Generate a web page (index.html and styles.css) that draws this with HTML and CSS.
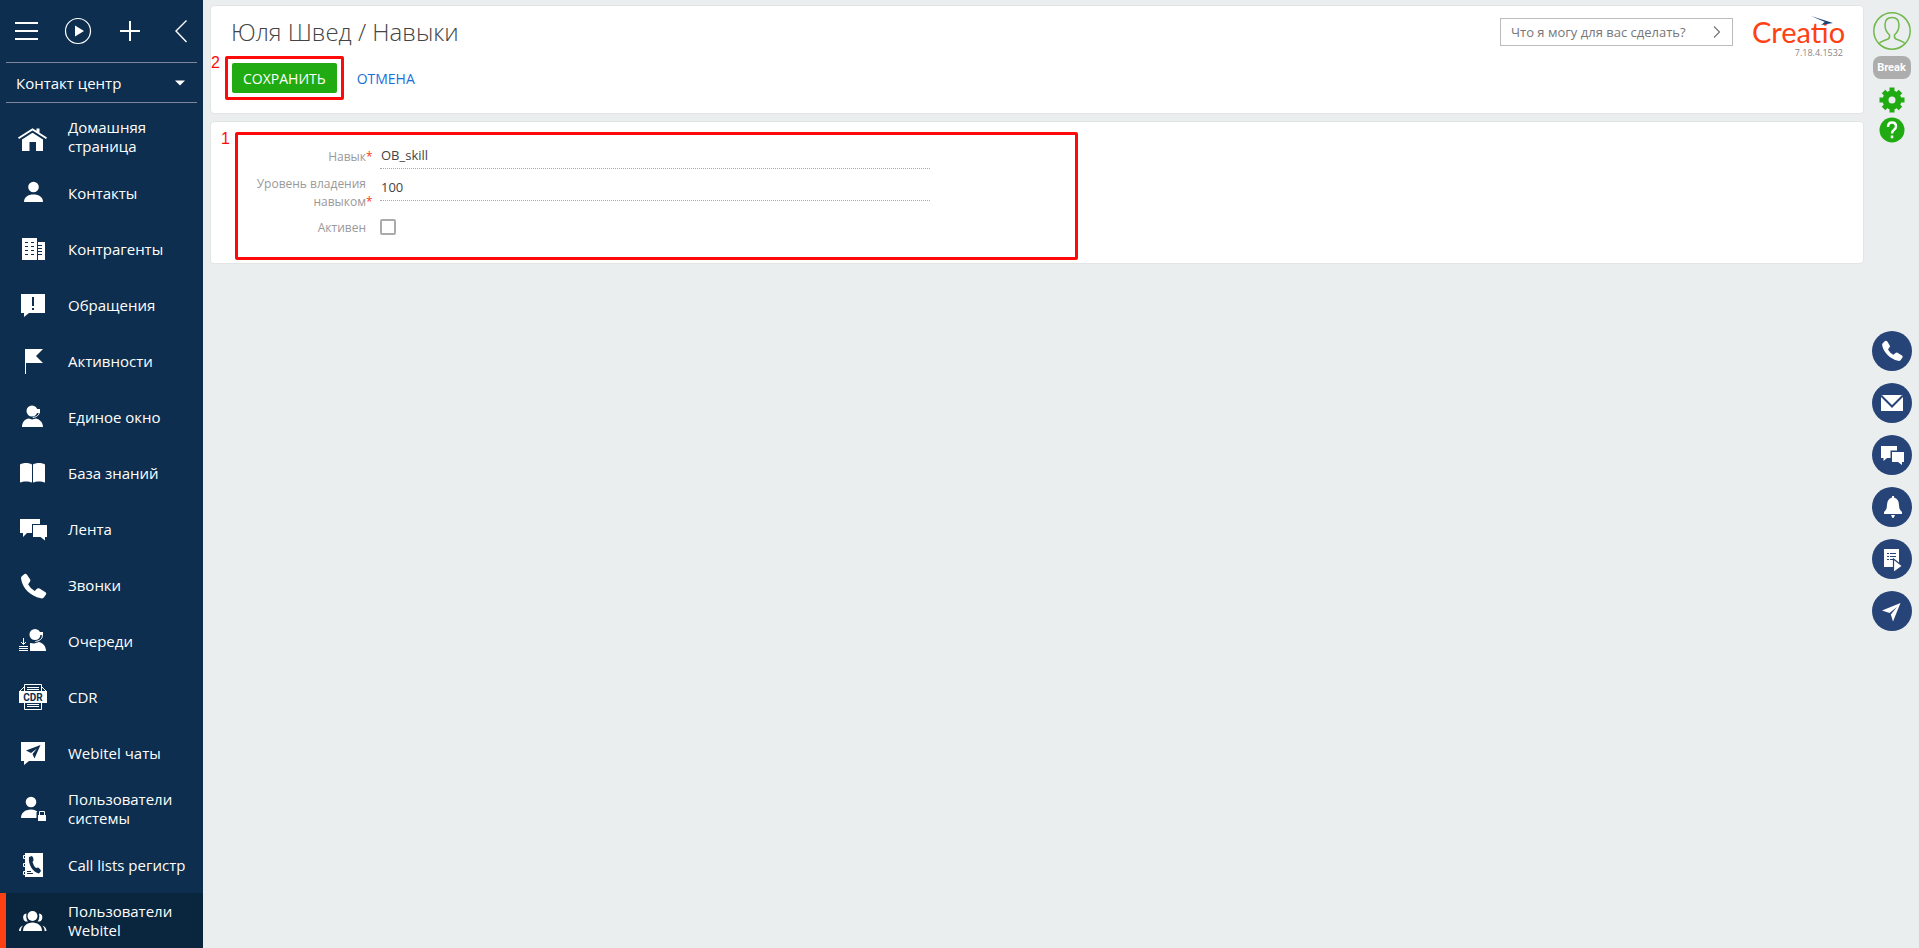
FILE: index.html
```html
<!DOCTYPE html>
<html lang="ru">
<head>
  <meta charset="UTF-8" />
  <meta name="viewport" content="width=device-width, initial-scale=1.0" />
  <title>Юля Швед / Навыки</title>
  <link rel="stylesheet" href="styles.css">
</head>
<body>
  <aside class="sidebar">
    <div class="sidebar-tools">
      <button type="button" aria-label="Меню">
        <svg width="24" height="28" viewBox="0 0 24 28"><path d="M0 6h23M0 14h23M0 22h23" stroke="#fff" stroke-width="2"/></svg>
      </button>
      <button type="button" aria-label="Запустить процесс">
        <svg width="28" height="28" viewBox="0 0 28 28"><circle cx="14" cy="14" r="12.5" fill="none" stroke="#fff" stroke-width="1.2"/><path d="M11 8.500v11l9-5.500z" fill="#fff"/></svg>
      </button>
      <button type="button" aria-label="Создать">
        <svg width="20" height="28" viewBox="0 0 20 28"><path d="M10 4v20M0 14h20" stroke="#fff" stroke-width="2"/></svg>
      </button>
      <button type="button" aria-label="Свернуть">
        <svg width="14" height="28" viewBox="0 0 14 28"><path d="M12.500 3.500L2 14l10.500 11" fill="none" stroke="#fff" stroke-width="1.4"/></svg>
      </button>
    </div>
    <button type="button" class="workplace">
      <span>Контакт центр</span>
      <svg width="10" height="6" viewBox="0 0 10 6"><path d="M0 0.500h10L5 5.500z" fill="#fff"/></svg>
    </button>

    <nav class="menu">
      <a href="#" class="menu-item">
        <svg class="menu-icon" viewBox="0 0 32 32"><path d="M2 16.500L16.500 7.200l4 2.500V7.500h3v4.200L31 16.500l-1 1.500L16.500 9.500 3 18z"/><path d="M6 18.500l10.500-6.700L27 18.500V30h-7v-9h-6.500v9H6z"/></svg>
        <span>Домашняя страница</span>
      </a>
      <a href="#" class="menu-item">
        <svg class="menu-icon" viewBox="0 0 32 32"><circle cx="17.500" cy="10" r="5.300"/><path d="M8 25c0-5 4-7.500 9.500-7.500s9.500 2.500 9.500 7.500z"/></svg>
        <span>Контакты</span>
      </a>
      <a href="#" class="menu-item">
        <svg class="menu-icon" viewBox="0 0 32 32"><path d="M6 5h15v22H6zM22 9h7v18h-7z"/><path class="cut" d="M9 9.500h3M15 9.500h3M9 13.500h3M15 13.500h3M9 17.500h3M15 17.500h3M9 21.500h3M15 21.500h3M22 12.500h4M22 15.500h4M22 18.500h4M22 21.500h4"/></svg>
        <span>Контрагенты</span>
      </a>
      <a href="#" class="menu-item">
        <svg class="menu-icon" viewBox="0 0 32 32"><path d="M5 5h24v19H13l-5 4v-4H5z"/><path class="cut cut-bold" d="M17 8v9M17 19v2"/></svg>
        <span>Обращения</span>
      </a>
      <a href="#" class="menu-item">
        <svg class="menu-icon" viewBox="0 0 32 32"><path d="M9 4h18l-7 7 7 7H10v11H9z"/></svg>
        <span>Активности</span>
      </a>
      <a href="#" class="menu-item">
        <svg class="menu-icon" viewBox="0 0 32 32"><circle cx="16" cy="10" r="5.500"/><path d="M6 26c0-5 3-8 7-8.500l3 1 4-1c4 1 7 4 7 8.500z"/><path class="line" d="M23.300 9v2c0 3-2.500 5-6.500 5.500"/><path d="M21 8h3v4h-3z"/></svg>
        <span>Единое окно</span>
      </a>
      <a href="#" class="menu-item">
        <svg class="menu-icon" viewBox="0 0 32 32"><path d="M4 7.500C7 5.500 13 5.500 16 7.500v18c-3-1.500-9-1.500-12 0zM17 7.500c3-2 9-2 12 0v18c-3-1.500-9-1.500-12 0z"/></svg>
        <span>База знаний</span>
      </a>
      <a href="#" class="menu-item">
        <svg class="menu-icon" viewBox="0 0 32 32"><path d="M4 6h20v5h-8v9h-5l-4 4v-4H4z"/><path d="M17 12h14v12h-2v3.500L24.500 24H17z"/></svg>
        <span>Лента</span>
      </a>
      <a href="#" class="menu-item">
        <svg class="menu-icon" viewBox="0 0 32 32"><path d="M5.500 7.500L8.500 5q1.500-.6 2.500.8l3.200 4.800q.6 1.300-.4 2.400l-1.700 2.300q2.300 4.500 6.600 6.700l2.500-2.400q1.200-.8 2.400-.1l5.900 3.700q1.300 1 .5 2.400l-2.200 2.900q-1 1.200-2.900.8C14 27 6.500 19 5.100 10q-.3-1.500.4-2.500z"/></svg>
        <span>Звонки</span>
      </a>
      <a href="#" class="menu-item">
        <svg class="menu-icon" viewBox="0 0 32 32"><circle cx="19" cy="9.500" r="5.500"/><path d="M14 26v-8l4 0.500 5-1.500c4 1 7 4 7 9z"/><path class="line" d="M26.300 9v2c0 3-3 5-7 5.500M7.500 13v6M5 17l2.500 2.500L10 17M3 21.500h9M3 23.500h9M3 25.500h9"/><path d="M24 7h3v3h-3z"/></svg>
        <span>Очереди</span>
      </a>
      <a href="#" class="menu-item">
        <svg class="menu-icon" viewBox="0 0 32 32"><path class="line" d="M8.500 10V3.500h17V10M11 6.500h12M11 8.500h12M8.500 22v6.500h17V22M11 23.500h12M11 25.500h12M4 10l4-4M30 10l-4-4"/><path d="M3 10h28v12H3z"/><text x="17" y="20" class="icon-text">CDR</text></svg>
        <span>CDR</span>
      </a>
      <a href="#" class="menu-item">
        <svg class="menu-icon" viewBox="0 0 32 32"><path d="M5 5h24v19H13l-5 4v-4H5z"/><path class="cut-fill" d="M10 13.500L24.500 8 18.500 21.500 16.500 17l4.500-5.500-6 4.500z"/></svg>
        <span>Webitel чаты</span>
      </a>
      <a href="#" class="menu-item">
        <svg class="menu-icon" viewBox="0 0 32 32"><circle cx="15" cy="9" r="5.300"/><path d="M5 25c0-5 4-8.500 10-8.500 3 0 5.500 1 6.500 2.500h-1V25z"/><path d="M22 22h8v6h-8z"/><path class="line" d="M23.500 22v-3.500h5V22"/></svg>
        <span>Пользователи системы</span>
      </a>
      <a href="#" class="menu-item">
        <svg class="menu-icon" viewBox="0 0 32 32"><path d="M9 4h18v24H9z"/><path class="line" d="M9 6.500H7.500v3H9M9 14.500H7.500v3H9M9 22.500H7.500v3H9"/><path class="cut-fill" d="M13 8l3-1q2 2 1.500 4.500L16.500 13q1 4 3.500 6l2-.5q2.500 1 3 3.500l-2 2.500C17 23 12 16 13 8z"/><path class="cut" d="M11 22.500h4M11 24.500h6"/></svg>
        <span>Call lists регистр</span>
      </a>
      <a href="#" class="menu-item active">
        <svg class="menu-icon" viewBox="0 0 32 32"><circle cx="16.500" cy="11" r="5"/><path d="M7 26c0-5 4-8.500 9.500-8.500S26 21 26 26z"/><path d="M10.500 8.500a4 4 0 1 0 1.500 8q-2.500-3-1.500-8zM23 8.500a4 4 0 1 1-1.500 8q2.500-3 1.500-8zM3 26q0-4 4-5.500-2 2-2.200 5.500zM30.500 26q0-4-4-5.500 2 2 2.200 5.500z"/></svg>
        <span>Пользователи Webitel</span>
      </a>
    </nav>
  </aside>

  <main class="content">
    <header class="panel page-header">
      <div class="heading">
        <h1>Юля Швед / Навыки</h1>
        <div class="actions">
          <div class="mark mark-save">
            <span class="mark-number">2</span>
            <button type="submit" form="skillForm" class="save">СОХРАНИТЬ</button>
          </div>
          <button type="button" class="cancel">ОТМЕНА</button>
        </div>
      </div>
      <div class="command">
        <input type="text" aria-label="Командная строка" placeholder="Что я могу для вас сделать?" />
        <button type="button" aria-label="Выполнить">
          <svg width="8" height="12" viewBox="0 0 8 12"><path d="M1 0.500L6.500 6 1 11.500" fill="none" stroke="#777" stroke-width="1.2"/></svg>
        </button>
      </div>
      <div class="brand">
        <div class="logo">Creatio
          <svg class="logo-arrow" width="22" height="10" viewBox="0 0 22 10"><path d="M0 0l22 7-12 2 4-3z" fill="#14467b"/></svg>
        </div>
        <div class="version">7.18.4.1532</div>
      </div>
    </header>

    <section class="panel page-body">
      <form class="mark mark-form" id="skillForm">
        <span class="mark-number">1</span>
        <div class="field">
          <label for="skill">Навык<span class="required">*</span></label>
          <input type="text" id="skill" value="OB_skill" required />
        </div>
        <div class="field field-level">
          <label for="level">Уровень владения навыком<span class="required">*</span></label>
          <input type="text" id="level" value="100" required />
        </div>
        <div class="field field-check">
          <label for="enabled">Активен</label>
          <input type="checkbox" id="enabled" />
        </div>
      </form>
    </section>
  </main>

  <aside class="rail">
    <div class="profile">
      <button type="button" aria-label="Профиль">
        <svg width="38" height="38" viewBox="0 0 38 38" fill="none" stroke="#72b84c" stroke-width="1.500"><circle cx="19" cy="19" r="18.200"/><path d="M6 32q1-2 4-3l5-2q2-1 1.500-4Q12 19 12 13q0-7.500 7-7.500T26 13q0 6-4.500 10-.5 3 1.500 4l5 2q3 1 4 3"/></svg>
      </button>
      <button type="button" class="status">Break</button>
      <button type="button" aria-label="Настройки" class="settings">
        <svg width="26" height="26" viewBox="-13 -13 26 26"><g fill="#21ab13"><circle r="9.500"/><path d="M-2.500-12.500h5v25h-5zM-12.500-2.500h25v5h-25z"/><path d="M-2.500-12h5V12h-5zM-12-2.500h24v5h-24z" transform="rotate(45)"/></g><circle r="3.500" fill="#eaeeee"/></svg>
      </button>
      <button type="button" aria-label="Справка">
        <svg width="26" height="26" viewBox="0 0 26 26"><circle cx="13" cy="13" r="12.500" fill="#21ab13"/><path d="M9 10q0-4.500 4-4.500t4 4q0 2-2.200 3.500-1.800 1.200-1.800 3.500M13 18.500v2.800" fill="none" stroke="#fff" stroke-width="2.500"/></svg>
      </button>
    </div>
    <div class="channels">
      <button type="button" aria-label="Звонки">
        <svg viewBox="0 0 40 40"><path d="M10.500 12.500L13 10q1.300-.6 2.300.6l2.500 4q.5 1-.4 2l-1.400 1.800q2 3.600 5.500 5.400l2-1.900q1-.7 2-.1l4.500 2.800q1.200.9.500 2l-2 2.700q-.8.800-2.400.5C18 28 11.500 21 10.200 14.500q-.2-1.300.3-2z"/></svg>
      </button>
      <button type="button" aria-label="Почта">
        <svg viewBox="0 0 40 40"><path d="M9 12h22v16H9z"/><path d="M9 12.500l11 11 11-11" fill="none" stroke="#274478" stroke-width="2"/></svg>
      </button>
      <button type="button" aria-label="Чаты">
        <svg viewBox="0 0 40 40"><path d="M9 11h16v4.500h-6.500V23H15l-3.500 3v-3H9z"/><path d="M20 17h12v10h-2v3l-4-3h-6z"/></svg>
      </button>
      <button type="button" aria-label="Уведомления">
        <svg viewBox="0 0 40 40"><path d="M20 9h2v1.500q5 1.500 5 7.500 0 5 3 7v2H12v-2q3-2 3-7 0-6 5-7.500zM19 28h4l-1.500 3h-1z"/></svg>
      </button>
      <button type="button" aria-label="Процессы">
        <svg viewBox="0 0 40 40"><path d="M12 10h15v18H12z"/><path d="M15 14.500h2M18 14.500h6M15 17.500h2M18 17.500h6M15 20.500h2M18 20.500h4" stroke="#274478"/><path d="M21.500 20l9 7-9 6.500z" stroke="#274478" stroke-width="1.200"/></svg>
      </button>
      <button type="button" aria-label="Сообщения">
        <svg viewBox="0 0 40 40"><path d="M10 19.500L28.500 12 21 30.500 18.800 23.500 25 16l-7.500 6z"/></svg>
      </button>
    </div>
  </aside>
</body>
</html>
```
FILE: styles.css
```css
* {
  box-sizing: border-box;
}
body {
  margin: 0;
  display: flex;
  height: 100vh;
  overflow: hidden;
  background-color: #eaeeee;
  color: #444;
  font-family: "Open Sans", "Noto Sans", sans-serif;
  font-size: 13px;
}
button {
  padding: 0;
  border: none;
  background: none;
  font: inherit;
  cursor: pointer;
}
svg {
  display: block;
}

/* left menu */
.sidebar {
  flex: none;
  width: 203px;
  background-color: #0d2e4e;
  color: #fff;
}
.sidebar-tools {
  display: flex;
  justify-content: space-between;
  align-items: center;
  height: 62px;
  margin: 0 6px;
  padding: 0 2px 0 7px;
}
.sidebar-tools button {
  display: flex;
  justify-content: center;
  width: 28px;
}
.workplace {
  display: flex;
  justify-content: space-between;
  align-items: center;
  width: 191px;
  height: 41px;
  margin: 0 6px 6px;
  padding: 0 12px 0 10px;
  border: solid #7d8799;
  border-width: 1px 0;
  color: #fff;
  font-size: 15px;
}
.menu-item {
  display: flex;
  align-items: center;
  height: 56px;
  padding: 0 16px;
  gap: 20px;
  color: #fff;
  font-size: 15px;
  line-height: 19px;
  text-decoration: none;
}
.menu-item.active {
  background-color: #0a253e;
  border-left: 6px solid #ff4013;
  padding-left: 10px;
}
.menu-icon {
  flex: none;
  width: 32px;
  height: 32px;
  fill: #fff;
}
.menu-icon .line {
  fill: none;
  stroke: #fff;
}
.menu-icon .cut {
  stroke: #0d2e4e;
}
.menu-icon .cut-bold {
  stroke-width: 2;
}
.menu-icon .cut-fill, .icon-text {
  fill: #0d2e4e;
}
.icon-text {
  font-family: Roboto, sans-serif;
  font-size: 10px;
  font-weight: bold;
  text-anchor: middle;
}

/* page */
.content {
  flex: 1;
  min-width: 0;
  padding: 5px 0 0 7px;
}
.panel {
  background: white;
  border: 1px solid #e3e5e5;
  border-radius: 4px;
}
.page-header {
  display: flex;
  align-items: flex-start;
  height: 109px;
  padding: 1px 18px 0 14px;
}
.heading {
  flex: 1;
}
h1 {
  margin: 7px 0 6px 6px;
  font-size: 24px;
  font-weight: 300;
  line-height: 36px;
}
.actions {
  display: flex;
  align-items: center;
  gap: 13px;
}
.mark {
  position: relative;
  border: 3px solid #ff0a0a;
  border-radius: 2px;
}
.mark-number {
  position: absolute;
  right: 100%;
  top: -5px;
  margin-right: 8px;
  color: #ff0a0a;
  font-family: "Liberation Sans", Arial, sans-serif;
  font-size: 16px;
  line-height: 18px;
}
.mark-save {
  padding: 4px;
}
.save {
  display: block;
  height: 30px;
  padding: 0 11px;
  border-radius: 2px;
  background-color: #21ab13;
  color: #fff;
  font-size: 14px;
}
.cancel {
  color: #1a6fdc;
  font-size: 14px;
}
.command {
  display: flex;
  align-items: center;
  width: 233px;
  height: 28px;
  margin-top: 11px;
  border: 1px solid #bbb;
}
.command input {
  flex: 1;
  min-width: 0;
  padding: 0 10px;
  border: none;
  outline: none;
  font: inherit;
}
.command input::placeholder {
  color: #777;
}
.command button {
  padding: 0 11px;
}
.brand {
  width: 93px;
  margin: 11px 0 0 19px;
}
.logo {
  position: relative;
  color: #ff4013;
  font-family: Lato, sans-serif;
  font-size: 29px;
  line-height: 28px;
}
.logo-arrow {
  position: absolute;
  top: -2px;
  right: 12px;
}
.version {
  padding-right: 2px;
  color: #888;
  font-size: 9px;
  line-height: 14px;
  text-align: right;
}
.page-body {
  margin-top: 7px;
  padding: 10px 24px 3px;
}

/* form */
.mark-form {
  width: 843px;
  height: 128px;
  padding: 8px 0 0 10px;
}
.field {
  display: flex;
  align-items: flex-start;
  height: 32px;
}
.field label {
  position: relative;
  width: 118px;
  margin-right: 14px;
  padding-top: 5px;
  color: #999;
  font-size: 12px;
  line-height: 18px;
  text-align: right;
}
.required {
  position: absolute;
  color: #ff4013;
}
.field input[type="text"] {
  width: 550px;
  height: 26px;
  padding: 0 1px 2px;
  border: none;
  border-bottom: 1px dotted #aaa;
  outline: none;
  color: #444;
  font: inherit;
}
.field-level label {
  padding-top: 0;
}
.field-level {
  height: 38px;
}
.field-check label {
  padding-top: 6px;
}
.field input[type="checkbox"] {
  appearance: none;
  width: 16px;
  height: 16px;
  margin: 6px 0 0;
  border: 2px solid #aaa;
  border-radius: 2px;
}
.field input[type="checkbox"]:checked {
  background-color: #21ab13;
}

/* right side */
.rail {
  flex: none;
  display: flex;
  flex-direction: column;
  align-items: center;
  width: 55px;
  padding-top: 12px;
}
.profile {
  display: flex;
  flex-direction: column;
  align-items: center;
  height: 319px;
}
.status {
  width: 38px;
  height: 23px;
  margin: 6px 0 8px;
  border-radius: 8px;
  background-color: #adadad;
  color: #fff;
  font-family: Roboto, sans-serif;
  font-size: 11px;
  font-weight: bold;
}
.settings {
  margin-bottom: 4px;
}
.channels {
  display: flex;
  flex-direction: column;
  gap: 12px;
}
.channels button {
  width: 40px;
  height: 40px;
  border-radius: 50%;
  background-color: #274478;
}
.channels svg {
  fill: #fff;
}
```
